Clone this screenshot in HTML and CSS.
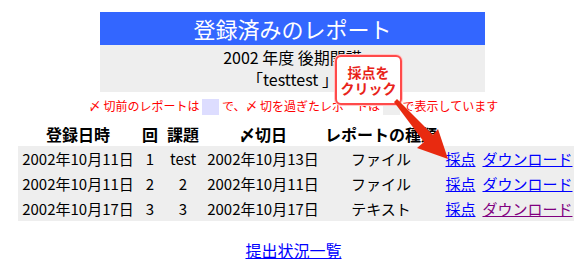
FILE: index.html
```html
<!DOCTYPE html>
<html lang="ja">
<head>
<meta charset="utf-8">
<link rel="stylesheet" href="styles.css">
</head>
<body>
<div class="page">
  <div class="title">登録済みのレポート</div>
  <div class="sub">
    <div>2002 年度 後期開講</div>
    <div>「testtest 」</div>
  </div>
  <div class="notice">〆 切前のレポートは <span class="sw sw-before"></span> で、〆 切を過ぎたレポートは <span class="sw sw-after"></span> で表示しています</div>
  <table class="reports">
    <colgroup>
      <col class="c1"><col class="c2"><col class="c3"><col class="c4"><col class="c5"><col class="c6"><col class="c7">
    </colgroup>
    <thead>
      <tr><th>登録日時</th><th>回</th><th>課題</th><th>〆切日</th><th>レポートの種類</th><th></th><th></th></tr>
    </thead>
    <tbody>
      <tr><td>2002年10月11日</td><td>1</td><td>test</td><td>2002年10月13日</td><td>ファイル</td><td><a href="#">採点</a></td><td><a href="#">ダウンロード</a></td></tr>
      <tr><td>2002年10月11日</td><td>2</td><td>2</td><td>2002年10月11日</td><td>ファイル</td><td><a href="#">採点</a></td><td><a href="#">ダウンロード</a></td></tr>
      <tr><td>2002年10月17日</td><td>3</td><td>3</td><td>2002年10月17日</td><td>テキスト</td><td><a href="#">採点</a></td><td><a href="#" class="visited">ダウンロード</a></td></tr>
    </tbody>
  </table>
  <div class="footer"><a href="#">提出状況一覧</a></div>

  <div class="callout">採点を<br>クリック</div>
  <svg class="arrow" width="70" height="70" viewBox="0 0 70 70">
    <polygon points="2,6 5,3 41,39 46,33 56,63 25,52 32,46" fill="#e82a10"/>
  </svg>
</div>
</body>
</html>
```
FILE: styles.css
```css
html, body {
  margin: 0;
  padding: 0;
  background: #fff;
}
body {
  font-family: "Noto Sans CJK JP", "DejaVu Sans", sans-serif;
  color: #000;
}
.page {
  position: relative;
  width: 587px;
  height: 266px;
  padding-top: 12px;
  box-sizing: border-box;
}
.title {
  width: 385px;
  margin: 0 0 0 100px;
  height: 33px;
  background: #3366ff;
  color: #fff;
  font-size: 22px;
  line-height: 33px;
  text-align: center;
}
.sub {
  width: 385px;
  margin-left: 100px;
  height: 47px;
  background: #eeeeee;
  font-size: 16px;
  line-height: 22px;
  text-align: center;
  padding-top: 1px;
  box-sizing: border-box;
}
.notice {
  margin-top: 5px;
  text-align: center;
  color: #ff0000;
  font-size: 12px;
  line-height: 17px;
  height: 17px;
}
.sw {
  display: inline-block;
  width: 17px;
  height: 16px;
  vertical-align: -4px;
}
.sw-before { background: #ddddff; }
.sw-after { background: #eeeeee; }
.reports {
  margin-left: 18px;
  margin-top: 7px;
  border-collapse: collapse;
  table-layout: fixed;
  width: 556px;
  font-size: 15px;
}
.c1 { width: 120px; }
.c2 { width: 24px; }
.c3 { width: 42px; }
.c4 { width: 118px; }
.c5 { width: 118px; }
.c6 { width: 41px; }
.c7 { width: 93px; }
.reports th {
  font-weight: bold;
  font-size: 16px;
  height: 25px;
  padding: 0;
  text-align: center;
  white-space: nowrap;
}
.reports td {
  background: #eeeeee;
  height: 25px;
  padding: 0;
  text-align: center;
  white-space: nowrap;
}
.reports a { color: #0000ff; }
.reports a.visited { color: #800080; }
.footer {
  margin-top: 17px;
  text-align: center;
  font-size: 16px;
}
.footer a { color: #0000ff; }
.callout {
  position: absolute;
  left: 335px;
  top: 55px;
  width: 67px;
  height: 50px;
  box-sizing: border-box;
  border: 2px solid #ff4a4a;
  border-radius: 6px;
  background: #fff;
  box-shadow: 0 0 0 1px #ffc8c8;
  color: #e8231a;
  font-weight: bold;
  font-size: 14px;
  line-height: 16px;
  text-align: center;
  padding-top: 7px;
}
.arrow {
  position: absolute;
  left: 392px;
  top: 96px;
}
```
